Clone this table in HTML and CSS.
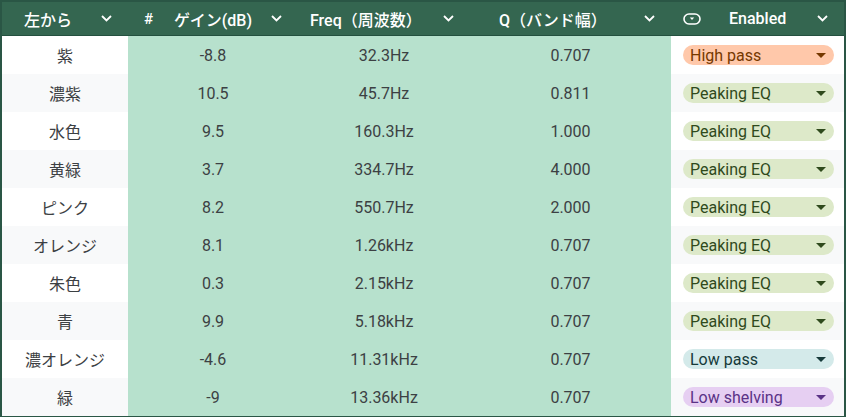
FILE: index.html
```html
<!DOCTYPE html>
<html lang="ja">
<head>
<meta charset="utf-8">
<link rel="stylesheet" href="styles.css">
</head>
<body>
<div class="table">
  <div class="row head">
    <div class="hc c1"><span>左から</span><svg class="chev" viewBox="0 0 11 7"><path d="M1 1l4.5 4.5L10 1"/></svg></div>
    <div class="hc c2"><span class="hash">#</span><span>ゲイン(dB)</span><svg class="chev" viewBox="0 0 11 7"><path d="M1 1l4.5 4.5L10 1"/></svg></div>
    <div class="hc c3"><span>Freq（周波数）</span><svg class="chev" viewBox="0 0 11 7"><path d="M1 1l4.5 4.5L10 1"/></svg></div>
    <div class="hc c4"><span>Q（バンド幅）</span><svg class="chev" viewBox="0 0 11 7"><path d="M1 1l4.5 4.5L10 1"/></svg></div>
    <div class="hc c5"><svg class="chip" viewBox="0 0 18 12"><rect x="1" y="1" width="16" height="10" rx="5"/><path class="tri" d="M6.8 4.6h4.4L9 7z"/></svg><span class="en">Enabled</span><svg class="chev" viewBox="0 0 11 7"><path d="M1 1l4.5 4.5L10 1"/></svg></div>
  </div>

  <div class="row"><div class="c name">紫</div><div class="c g">-8.8</div><div class="c g">32.3Hz</div><div class="c g">0.707</div><div class="c t"><span class="pill hp">High pass<i></i></span></div></div>
  <div class="row alt"><div class="c name">濃紫</div><div class="c g">10.5</div><div class="c g">45.7Hz</div><div class="c g">0.811</div><div class="c t"><span class="pill pk">Peaking EQ<i></i></span></div></div>
  <div class="row"><div class="c name">水色</div><div class="c g">9.5</div><div class="c g">160.3Hz</div><div class="c g">1.000</div><div class="c t"><span class="pill pk">Peaking EQ<i></i></span></div></div>
  <div class="row alt"><div class="c name">黄緑</div><div class="c g">3.7</div><div class="c g">334.7Hz</div><div class="c g">4.000</div><div class="c t"><span class="pill pk">Peaking EQ<i></i></span></div></div>
  <div class="row"><div class="c name">ピンク</div><div class="c g">8.2</div><div class="c g">550.7Hz</div><div class="c g">2.000</div><div class="c t"><span class="pill pk">Peaking EQ<i></i></span></div></div>
  <div class="row alt"><div class="c name">オレンジ</div><div class="c g">8.1</div><div class="c g">1.26kHz</div><div class="c g">0.707</div><div class="c t"><span class="pill pk">Peaking EQ<i></i></span></div></div>
  <div class="row"><div class="c name">朱色</div><div class="c g">0.3</div><div class="c g">2.15kHz</div><div class="c g">0.707</div><div class="c t"><span class="pill pk">Peaking EQ<i></i></span></div></div>
  <div class="row alt"><div class="c name">青</div><div class="c g">9.9</div><div class="c g">5.18kHz</div><div class="c g">0.707</div><div class="c t"><span class="pill pk">Peaking EQ<i></i></span></div></div>
  <div class="row"><div class="c name">濃オレンジ</div><div class="c g">-4.6</div><div class="c g">11.31kHz</div><div class="c g">0.707</div><div class="c t"><span class="pill lp">Low pass<i></i></span></div></div>
  <div class="row alt"><div class="c name">緑</div><div class="c g">-9</div><div class="c g">13.36kHz</div><div class="c g">0.707</div><div class="c t"><span class="pill ls">Low shelving<i></i></span></div></div>
</div>
</body>
</html>
```

FILE: styles.css
```css
* { box-sizing: border-box; }
html, body { margin: 0; padding: 0; background: #ffffff; }
body {
  width: 846px;
  height: 417px;
  overflow: hidden;
  font-family: Roboto, "Noto Sans CJK JP", sans-serif;
  color: #3c4043;
}
.table {
  width: 846px;
  height: 417px;
  border: 2px solid #2a5645;
  border-bottom-width: 1px;
  display: flex;
  flex-direction: column;
}
.row {
  display: grid;
  grid-template-columns: 126px 170px 172px 201px 1fr;
  height: 38px;
  flex: none;
  background: #ffffff;
}
.row.alt { background: #f8f9fa; }
.row.head {
  height: 34px;
  background: #346650;
  border-bottom: 1px solid #24503f;
  color: #ffffff;
  font-weight: 500;
  font-size: 16px;
}
.hc {
  display: flex;
  align-items: center;
  padding-right: 16px;
}
.hc .chev { margin-left: auto; }
.c1 { padding-left: 22px; }
.c2 { padding-left: 16px; }
.c3 { padding-left: 12px; }
.c4 { padding-left: 29px; }
.c5 { padding-left: 12px; }
.hash { margin-right: 21px; font-size: 15px; }
.hc .chev {
  width: 11px;
  height: 7px;
  fill: none;
  stroke: #ffffff;
  stroke-width: 1.8;
  flex: none;
}
.chip {
  width: 18px;
  height: 12px;
  fill: none;
  stroke: #ffffff;
  stroke-width: 1.6;
  flex: none;
}
.chip .tri { fill: #ffffff; stroke: none; }
.en { margin-left: 28px; }
.c {
  display: flex;
  align-items: center;
  justify-content: center;
  font-size: 16px;
}
.c.g { background: #b7e1cd; }
.c.t { justify-content: flex-start; padding-left: 12px; }
.pill {
  display: flex;
  align-items: center;
  width: 151px;
  height: 20px;
  border-radius: 10px;
  padding: 0 0 0 7px;
  font-size: 16px;
  position: relative;
}
.pill i {
  position: absolute;
  right: 8px;
  top: 8px;
  width: 0;
  height: 0;
  border-left: 5px solid transparent;
  border-right: 5px solid transparent;
  border-top: 5px solid currentColor;
}
.hp { background: #ffc8aa; color: #753800; }
.pk { background: #dde9c9; color: #2f4a1c; }
.lp { background: #d4eaea; color: #163a3a; }
.ls { background: #e6cff2; color: #5a3286; }
```
